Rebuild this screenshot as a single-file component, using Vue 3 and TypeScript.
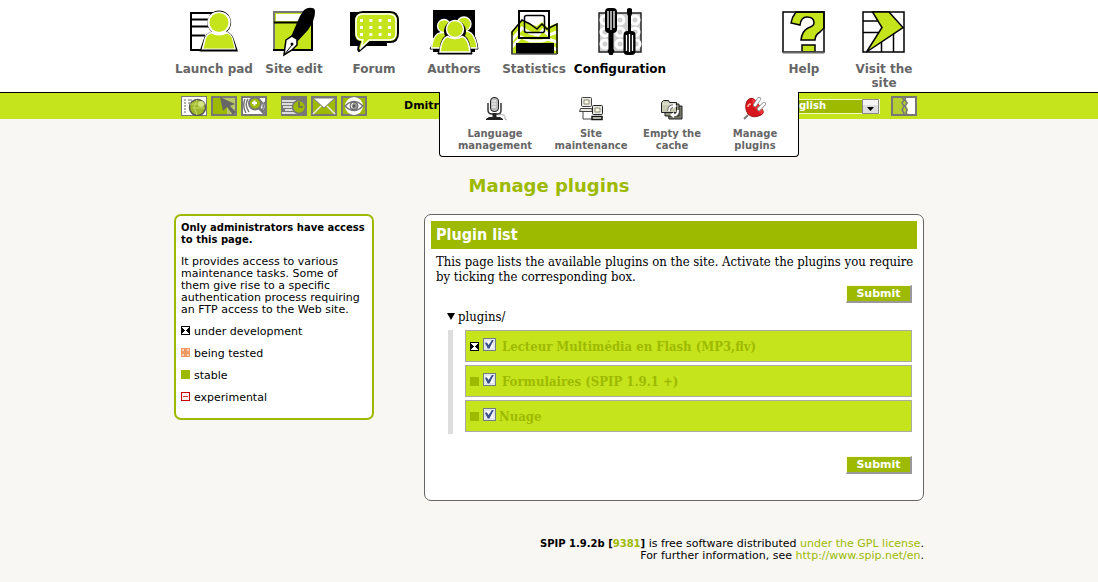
<script setup lang="ts">
import { ref } from 'vue'

type Status = 'dev' | 'test' | 'stable' | 'experimental'
interface Plugin { id: string; name: string; status: Status; active: boolean; spaced: boolean }

const plugins = ref<Plugin[]>([
  { id: 'flash', name: 'Lecteur Multimédia en Flash (MP3,flv)', status: 'dev', active: true, spaced: true },
  { id: 'forms', name: 'Formulaires (SPIP 1.9.1 +)', status: 'stable', active: true, spaced: true },
  { id: 'nuage', name: 'Nuage', status: 'stable', active: true, spaced: false },
])
const legend: { status: Status; text: string }[] = [
  { status: 'dev', text: 'under development' },
  { status: 'test', text: 'being tested' },
  { status: 'stable', text: 'stable' },
  { status: 'experimental', text: 'experimental' },
]
const open = ref(true)
const language = ref('en')
</script>

<template>
  <div class="page">
    <header>
      <nav class="main-nav wrap">
        <a href="#" class="nav-item">
          <svg viewBox="0 0 50 50" class="big">
            <path d="M2 6H28V43H2ZM2 12.500H28M2 19.500H22M2 28.500H16" fill="#fff" stroke="#000" stroke-width="2" />
            <path d="M30 3.500a12 12 0 0 1 8 21q5 2 7 8l4 12H10.500l4-12q2-6 8-8A12 12 0 0 1 30 3.500Z" fill="#000" />
            <path d="M30 4.500a11 11 0 0 1 7 20q5 1.500 7 7l3 11H12.500l3-11q2-5.500 7.500-7A11 11 0 0 1 30 4.500Z" fill="#fff" />
            <circle cx="30" cy="15.500" r="9.500" fill="#c5e41c" />
            <path d="M22 26.500q8 4 16 0 4 1.500 5 5l2.500 10h-31l2.500-10q1.500-4 5-5Z" fill="#c5e41c" />
          </svg>
          <span>Launch pad</span>
        </a>
        <a href="#" class="nav-item">
          <svg viewBox="0 0 50 50" class="big">
            <rect x="5" y="5" width="38" height="38" fill="#c5e41c" stroke="#000" stroke-width="2" />
            <path d="M4 4H34V6H6V42H4Z" fill="#777" />
            <path d="M7 7H33V14H7Z" fill="#fff" /><path d="M5 15.500H30" stroke="#000" stroke-width="2" />
            <path d="M35 3q4-3 8-2 3 0 3 4 0 8-7 18L27 36l-6-4 3-7 7-16Z" fill="#000" />
            <path d="M17 33l6-4 5 3v6l-5 5-8 5 1-8Z" fill="#fff" stroke="#000" stroke-width="1.500" />
            <path d="M15 48l8-10" stroke="#000" /><circle cx="23" cy="37" r="1.500" />
          </svg>
          <span>Site edit</span>
        </a>
        <a href="#" class="nav-item">
          <svg viewBox="0 0 50 50" class="big">
            <path d="M1 5H38V39H1Z" />
            <path d="M14 5H41q8 0 8 9V26q0 9-8 9H21L10 44q-2-1 1-9-6-1-6-9V14q0-9 9-9Z" fill="#c5e41c" stroke="#000" stroke-width="2" />
            <path d="M14 7H40q7 0 7 7V26q0 7-7 7H20L12 41l2-8q-7 0-7-7V14q0-7 7-7Z" fill="#c5e41c" stroke="#fff" stroke-width="1.500" />
            <path d="M11 13.500H43M11 20.500H43M11 27.500H43" stroke="#fff" stroke-width="3" stroke-dasharray="3 6.300" />
          </svg>
          <span>Forum</span>
        </a>
        <a href="#" class="nav-item">
          <svg viewBox="0 0 50 50" class="big">
            <path d="M4 3H46V45H4Z" />
            <g fill="#000">
              <path d="M9 26L1 42H16V26ZM42 25q5 3 7 17H34V25ZM18 28Q11 30 9 47H43Q41 30 34 28Z" stroke="#000" stroke-width="1" />
            </g>
            <g fill="#c5e41c" stroke="#fff" stroke-width="1.300">
              <path d="M9 26.500q6-2 9 0l-1 14.500H2.500q1-11 6.500-14.500ZM31 25q7-2 11 1 5 5 6 15H34Z" />
              <circle cx="15" cy="19" r="6.500" /><circle cx="35" cy="17" r="7" />
            </g>
            <path d="M16 29a11 11 0 1 1 20 0q5 3 6 17H10q1-14 6-17Z" fill="#000" />
            <path d="M18.500 29.500q7.500 4 15 0 6 2 7.500 15.500H11q1.500-13.500 7.500-15.500Z" fill="#c5e41c" stroke="#fff" stroke-width="1.500" />
            <circle cx="26" cy="22" r="8.500" fill="#c5e41c" stroke="#fff" stroke-width="1.500" />
          </svg>
          <span>Authors</span>
        </a>
        <a href="#" class="nav-item">
          <svg viewBox="0 0 50 50" class="big">
            <rect x="10" y="4" width="30" height="27" fill="#fff" />
            <path d="M2 25L13 13l10 5 5 1 5-4 5 5 11-4V47H2Z" fill="#c5e41c" />
            <path d="M3 33l10-12 8 5 8 2 5-5 6 5 8-3M3 40l9-10 9 4h12l6-2 9 3M40 38l8 5" fill="none" stroke="#fff" stroke-width="3" />
            <path d="M3 47V25L13 13l8 4 7 5 5-5 5 5 10-5V47" fill="none" stroke="#000" stroke-width="1.500" />
            <rect x="10" y="4" width="30" height="27" fill="none" stroke="#000" stroke-width="2" />
            <rect x="15.500" y="8.500" width="20" height="17" rx="2" fill="none" stroke="#000" stroke-width="1.500" />
            <path d="M7 36H45V47H7Z" /><path d="M3 28V47H48" fill="none" stroke="#555" stroke-width="1.500" />
          </svg>
          <span>Statistics</span>
        </a>
        <a href="#" class="nav-item current">
          <svg viewBox="0 0 50 50" class="big">
            <rect x="4" y="6" width="42" height="39" fill="#d0d0d0" stroke="#222" stroke-width="1.500" />
            <g fill="none" stroke="#fff" stroke-width="3"><circle cx="10" cy="13" r="4" /><circle cx="25" cy="13" r="4" /><circle cx="40" cy="13" r="4" /><circle cx="10" cy="25" r="4" /><circle cx="25" cy="25" r="4" /><circle cx="40" cy="25" r="4" /><circle cx="10" cy="37" r="4" /><circle cx="25" cy="37" r="4" /><circle cx="41" cy="37" r="4" /></g>
            <path d="M13.500 23h5v19l1 2-2 4h-3l-2-4 1-2ZM32 2q2.500-2 5 0v5l-1 2v16h-3V9l-1-2Z" />
            <rect x="10" y="1" width="12" height="25" rx="4" /><rect x="28.500" y="24" width="12" height="24" rx="4" />
            <path d="M13 4v17M16 4v19M19 4v17M31.500 28v16M34.500 27v18M37.500 28v16" stroke="#fff" stroke-width="1.300" />
          </svg>
          <span>Configuration</span>
        </a>
        <span class="spacer"></span>
        <a href="#" class="nav-item">
          <svg viewBox="0 0 50 50" class="big">
            <rect x="4" y="5" width="41" height="40" fill="#fff" />
            <path d="M17 5Q13 10 12 16l9 2Q22 10 28 10q7 0 7 6 0 3-6 5-6 3-7 12h14q0-5 5-8l4-4V5Z" fill="#c5e41c" stroke="#000" stroke-width="1.500" />
            <path d="M23 38H36V45H23Z" fill="#c5e41c" stroke="#000" stroke-width="1.500" />
            <rect x="4" y="5" width="41" height="40" fill="none" stroke="#000" stroke-width="1.500" /><path d="M4 45.500H45" stroke="#666" stroke-width="2" />
          </svg>
          <span>Help</span>
        </a>
        <a href="#" class="nav-item">
          <svg viewBox="0 0 50 50" class="big">
            <path d="M4 5H45V45H4ZM4 14H22M4 25.500H20M22.500 30V45M34.500 25V45" fill="#fff" stroke="#000" stroke-width="1.500" />
            <path d="M13.500 5H30L44 20.500 7.500 45 23 20.500Z" fill="#c5e41c" stroke="#000" stroke-width="1.500" />
          </svg>
          <span>Visit the site</span>
        </a>
      </nav>

      <div class="bar">
        <div class="wrap tools">
          <a href="#" class="tool" aria-label="Site map">
            <svg viewBox="0 0 26 20"><path d="M0 0H26V20H0Z" fill="#fff" stroke="#777" stroke-width="2" /><path d="M3 4h2M3 7h2M3 10h2M3 13h2M3 16h2M7 4h4M7 7h2" stroke="#666" /><circle cx="16.500" cy="11.500" r="8" fill="#9fb829" stroke="#555" stroke-width="1.500" /><path d="M9 8h15M12 12h12M16 4l-3 7 3 8" fill="none" stroke="#c5d96d" /><circle cx="20" cy="8" r="3" fill="#d5e584" /></svg>
          </a>
          <a href="#" class="tool" aria-label="Select">
            <svg viewBox="0 0 26 20"><path d="M1 1H25V19H1Z" fill="#9dba00" stroke="#777" stroke-width="2" /><path d="M11 2H24V18H16V9Z" fill="#b9c767" /><path d="M9 1l3 14 4-4 6 8 3-3-6-6 5-2Z" fill="#666" /></svg>
          </a>
          <a href="#" class="tool" aria-label="Search">
            <svg viewBox="0 0 26 20"><path d="M1 1H25V19H1Z" fill="#fff" stroke="#777" stroke-width="2" /><path d="M4 3q-3 7 1 14M7 3q-4 6 1 13M20 5q4 3 1 11M23 6q3 5-1 11" fill="none" stroke="#777" stroke-width="1.500" /><circle cx="14" cy="7.500" r="6" fill="#9dba00" stroke="#777" stroke-width="2" /><path d="M18 12l6 6" stroke="#777" stroke-width="3" /><path d="M11 7h5M13.500 4.500v5" stroke="#fff" stroke-width="2" /></svg>
          </a>
          <a href="#" class="tool gap" aria-label="Activity">
            <svg viewBox="0 0 26 20"><path d="M0 0H26V20H0Z" fill="#777" /><path d="M1 5h14M1 8h12M2 11h10M4 14h10M1 17h16" stroke="#fff" stroke-width="1.500" /><circle cx="18" cy="11" r="6.500" fill="#9dba00" stroke="#777" stroke-width="1.500" /><path d="M18 6v5h4" fill="none" stroke="#666" stroke-width="1.500" /></svg>
          </a>
          <a href="#" class="tool" aria-label="Messages">
            <svg viewBox="0 0 26 20"><path d="M1 1H25V19H1Z" fill="#9dba00" stroke="#777" stroke-width="2" /><path d="M2 2H24L13 12Z" fill="#fff" stroke="#777" /><path d="M2 18l8-8M24 18l-8-8" stroke="#eee" stroke-width="1.500" /></svg>
          </a>
          <a href="#" class="tool" aria-label="View">
            <svg viewBox="0 0 26 20"><path d="M1 1H25V19H1Z" fill="#9dba00" stroke="#777" stroke-width="2" /><circle cx="13" cy="10" r="9" fill="#fff" /><path d="M4 10q9-9 18 0-9 9-18 0Z" fill="#fff" stroke="#777" stroke-width="1.500" /><circle cx="13" cy="10" r="4" fill="#999" stroke="#666" /><circle cx="13" cy="10" r="1.500" fill="#555" /><path d="M12 7q-3 2-1 5" stroke="#fff" fill="none" /></svg>
          </a>
          <strong class="user">Dmitr</strong>
          <span class="spacer"></span>
          <span class="lang">
            <select v-model="language" aria-label="Language"><option value="en">English</option></select>
            <svg viewBox="0 0 17 15" aria-hidden="true"><path d="M.500.500H16.500V14.500H.500Z" fill="#ddd" stroke="#888" /><path d="M1 1H16V6H1Z" fill="#f5f5f5" /><path d="M5 8h7l-3.500 4Z" /></svg>
          </span>
          <a href="#" class="tool logout" aria-label="Log out">
            <svg viewBox="0 0 26 20"><path d="M1 1H25V19H1Z" fill="#b5cf30" stroke="#777" stroke-width="2" /><path d="M15 2H24V18H17l-1-2 1-3-2-3 2-3-2-3Z" fill="#fff" /><path d="M11 1l2 3-2 3 2 3-2 4 2 3-1 2M15 1l-1 3 2 3-2 3 2 4-1 3 1 2" fill="none" stroke="#777" stroke-width="1.500" /></svg>
          </a>
        </div>
      </div>

      <nav class="submenu">
        <a href="#">
          <svg viewBox="0 0 24 24"><path d="M5 6v7q0 4 4 4h6q3 0 3-4V6" fill="none" stroke="#333" stroke-width="1.500" /><rect x="7.500" y=".500" width="8" height="14" rx="3.500" fill="#bbb" stroke="#222" /><path d="M9 4h4M9 7h4M9 10h4" stroke="#fff" /><path d="M11.500 16v4" stroke="#222" stroke-width="4" /><path d="M3 22.500l3-2h11l3 2Z" fill="#222" stroke="#222" /><path d="M15 18q8-2 7 4l2 1" fill="none" stroke="#aaa" /></svg>
          <span>Language management</span>
        </a>
        <a href="#">
          <svg viewBox="0 0 24 24"><g fill="#e9e9df" stroke="#444"><rect x="2.500" y=".500" width="10" height="9" rx="1" /><path d="M1.500 11.500h11l1 3H.500Z" /><path d="M4 15v7h9" fill="none" /><rect x="13.500" y="8.500" width="10" height="9" rx="1" stroke="#222" /><path d="M13 19.500h10v3H13Z" stroke="#111" stroke-width="1.500" /></g><path d="M5 3h5v4H5ZM16 11h5v4H16Z" fill="#ffffe0" stroke="#888" /></svg>
          <span>Site maintenance</span>
        </a>
        <a href="#">
          <svg viewBox="0 0 24 24"><g stroke="#222"><path d="M7 9h15v13H9Z" fill="#777866" /><path d="M5 7h14v12H5Z" fill="#999a83" /><path d="M1.500 5.500l2-2h5l1 2h7v10h-15Z" fill="#c9cbb2" /></g><path d="M2 7h13" stroke="#eee" /><path d="M9 14q0-5 5-5M18 13q0 6-5 5" fill="none" stroke="#555" stroke-width="3.500" /><path d="M9 14q0-5 5-5M18 13q0 6-5 5" fill="none" stroke="#fff" stroke-width="2" /><path d="M13 6l4 3-4 3ZM14 15l-4 3 4 3Z" fill="#fff" /></svg>
          <span>Empty the cache</span>
        </a>
        <a href="#">
          <svg viewBox="0 0 24 24"><path d="M5 18l-4 4" stroke="#777" stroke-width="2" /><path d="M4 4q4-5 8-1l7 9q3 4-1 6-8 4-13-1-4-6-1-13Z" fill="#d6161c" stroke="#a01010" /><path d="M9 2q2-1 4 2l6 8q2 3 0 5-2 0-5-4Q8 6 9 2Z" fill="#ee3438" /><path d="M5 10q0-3 3-3" fill="none" stroke="#ffb0a8" stroke-width="1.500" /><path d="M12 8l4-6M16 12l5-5" stroke="#888" stroke-width="4" stroke-linecap="round" /><path d="M12 8l4-6M16 12l5-5" stroke="#fff" stroke-width="2.500" stroke-linecap="round" /></svg>
          <span>Manage plugins</span>
        </a>
      </nav>
    </header>

    <h1>Manage plugins</h1>

    <main class="wrap columns">
      <aside>
        <p><strong>Only administrators have access to this page.</strong></p>
        <p>It provides access to various maintenance tasks. Some of them give rise to a specific authentication process requiring an FTP access to the Web site.</p>
        <p v-for="item in legend" :key="item.status" class="legend"><i class="mark" :class="item.status"></i>{{ item.text }}</p>
      </aside>
      <form class="panel" @submit.prevent>
        <h2>Plugin list</h2>
        <p class="intro">This page lists the available plugins on the site. Activate the plugins you require by ticking the corresponding box.</p>
        <div class="actions"><button type="submit" class="submit">Submit</button></div>
        <button type="button" class="folder" :aria-expanded="open" @click="open = !open"><i class="caret"></i>plugins/</button>
        <ul v-show="open">
          <li v-for="plugin in plugins" :key="plugin.id">
            <i class="mark" :class="plugin.status"></i>
            <input :id="plugin.id" v-model="plugin.active" type="checkbox">
            <label :for="plugin.id" :class="{ spaced: plugin.spaced }">{{ plugin.name }}</label>
          </li>
        </ul>
        <div class="actions"><button type="submit" class="submit">Submit</button></div>
      </form>
    </main>

    <footer class="wrap footer">
      <strong>SPIP 1.9.2b [<a href="#">9381</a>]</strong> is free software distributed <a href="#">under the GPL license</a>.<br>
      For further information, see <a href="#">http://www.spip.net/en</a>.
    </footer>
  </div>
</template>

<style>
body { margin: 0; background: #f8f7f3; }
</style>

<style scoped>
* { box-sizing: border-box; }
.page { font-family: "DejaVu Sans", Verdana, sans-serif; font-size: 11px; line-height: 12px; color: #000; }
strong { font-size: 10px; }
.wrap { width: 750px; max-width: 100%; margin: 0 auto; }
a { text-decoration: none; color: #9dba00; }
header { position: relative; background: #fff; }
.main-nav { display: flex; min-height: 92px; padding-top: 7px; }
.nav-item { display: flex; flex-direction: column; align-items: center; width: 80px; font: bold 12px/14px "DejaVu Sans", sans-serif; color: #666; text-align: center; }
.nav-item.current { width: 92px; color: #000; }
.big { width: 50px; height: 50px; margin-bottom: 5px; }
.spacer { flex: 1; }
.bar { background: #c5e41c; border-top: 1px solid #000; height: 27px; }
.tools { display: flex; align-items: center; height: 26px; padding: 0 7px; }
.tool { margin-right: 4px; height: 20px; }
.tool svg { display: block; width: 26px; height: 20px; }
.tool.gap { margin-left: 10px; }
.tool.logout { margin: 0 0 0 11px; }
.user { margin-left: 33px; font-size: 11px; }
.lang { position: relative; height: 15px; }
.lang select { display: block; width: 98px; height: 15px; padding: 0 0 0 2px; border: 1px solid #f4f8cf; border-radius: 0; appearance: none; background: #9dba00; color: #fff; font: bold 10px/12px "DejaVu Sans", sans-serif; }
.lang svg { position: absolute; right: 1px; top: 0; width: 17px; height: 15px; pointer-events: none; }
.submenu { position: absolute; z-index: 2; top: 92px; left: calc(50% - 110px); display: grid; grid-template-columns: 110px 82px 80px 86px; height: 65px; padding-top: 5px; border: 1px solid #000; border-top: 0; border-radius: 0 0 4px 4px; background: #fff; }
.submenu a { display: flex; flex-direction: column; align-items: center; color: #666; font-size: 10px; font-weight: bold; text-align: center; }
.submenu svg { width: 24px; height: 24px; margin-bottom: 7px; }
.submenu span { width: min-content; }
.submenu a:nth-child(3) span { width: 66px; }
h1 { margin: 56px 0 17px; font-size: 18px; line-height: 22px; text-align: center; color: #9dba00; }
.columns { display: flex; align-items: flex-start; gap: 50px; }
aside { width: 200px; padding: 6px 5px 4px; border: 2px solid #9dba00; border-radius: 7px; background: #fff; }
aside p { margin: 0 0 10px; }
.legend { display: flex; }
.mark { flex: none; width: 9px; height: 9px; margin-right: 4px; background: #9dba00; }
.mark.dev { border: 1px solid #000; background: conic-gradient(#fff 45deg, #000 45deg 135deg, #fff 135deg 225deg, #000 225deg 315deg, #fff 315deg); }
.mark.test { border: 1px solid #f09a62; background: linear-gradient(#f09a62, #f09a62) center / 7px 3px no-repeat, linear-gradient(#f09a62, #f09a62) center / 3px 7px no-repeat, #fbd5bd; }
.mark.experimental { border: 1px solid #c00; background: linear-gradient(#d33, #d33) center / 5px 1px no-repeat, #fff0f0; }
.panel { flex: 1; min-width: 0; padding: 6px 6px 26px; border: 1px solid #666; border-radius: 7px; background: #fff; font: 13px/15px "DejaVu Serif Condensed", "DejaVu Serif", serif; }
h2 { margin: 0 0 5px; padding: 2px 5px; background: #9dba00; color: #fff; font: bold 16px/24px "DejaVu Sans Condensed", "DejaVu Sans", sans-serif; }
.intro { margin: 0; padding-left: 5px; }
.actions { display: flex; justify-content: flex-end; padding: 1px 5px 0; }
.submit { width: 66px; height: 18px; padding: 0; border: 1px solid #fffde0; border-right: 2px solid #999; border-bottom: 2px solid #999; background: #9dba00; color: #fff; font: bold 11px/14px "DejaVu Sans", sans-serif; }
.folder { display: flex; align-items: center; margin: 6px 0 6px 16px; padding: 0; border: 0; background: none; color: #000; font: inherit; }
.caret { width: 8px; height: 7px; margin-right: 3px; background: #000; clip-path: polygon(0 0, 100% 0, 50% 100%); }
ul { display: grid; gap: 3px; margin: 0 5px 21px 17px; padding: 0 0 2px 12px; border-left: 5px solid #ddd; list-style: none; }
li { display: flex; align-items: center; height: 32px; padding-left: 4px; border: 1px solid #aaa; background: #c5e41c; color: #9dba00; font-weight: bold; }
input { appearance: none; width: 13px; height: 13px; margin: 0 0 4px; border: 1px solid #707d85; background: #fff; box-shadow: inset 0 0 0 2px #e3e6ea; }
input:checked::after { content: ""; display: block; width: 9px; height: 9px; margin: 1px; background: #39508c; clip-path: polygon(0 40%, 20% 30%, 40% 60%, 80% 0, 100% 0, 50% 100%, 30% 100%); }
label { margin-left: 3px; }
label.spaced { margin-left: 6px; }
.footer { margin-top: 37px; text-align: right; }
</style>
